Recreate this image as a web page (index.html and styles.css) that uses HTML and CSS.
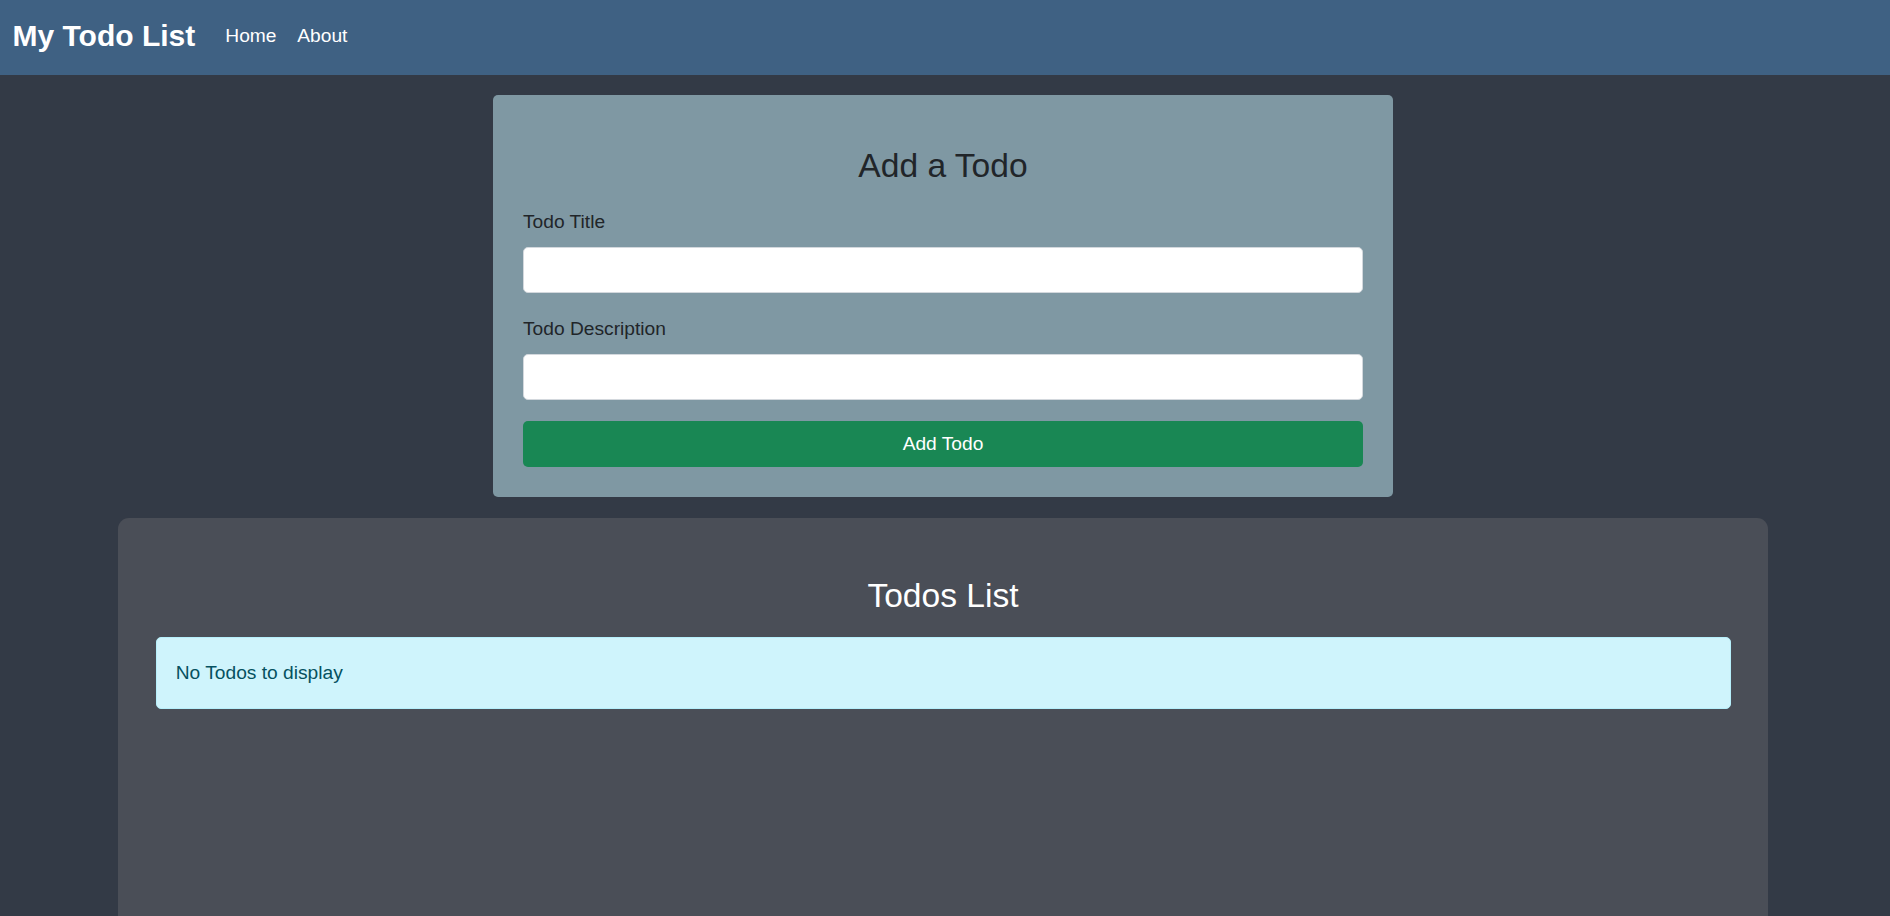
FILE: index.html
```html
<!DOCTYPE html>
<html lang="en">
<head>
<meta charset="utf-8">
<title>My Todo List</title>
<link rel="stylesheet" href="styles.css">
</head>
<body>
<header class="navbar">
  <a class="brand" href="#">My Todo List</a>
  <nav class="nav">
    <a class="nav-link" href="#">Home</a>
    <a class="nav-link" href="#">About</a>
  </nav>
</header>
<main class="main">
  <section class="card-add">
    <h3 class="card-title">Add a Todo</h3>
    <form class="todo-form">
      <div class="form-group">
        <label class="form-label" for="title">Todo Title</label>
        <input class="form-control" type="text" id="title">
      </div>
      <div class="form-group">
        <label class="form-label" for="desc">Todo Description</label>
        <input class="form-control" type="text" id="desc">
      </div>
      <button type="button" class="btn-success">Add Todo</button>
    </form>
  </section>
  <section class="card-list">
    <h3 class="list-title">Todos List</h3>
    <div class="alert-info">No Todos to display</div>
  </section>
</main>
</body>
</html>
```
FILE: styles.css
```css
html, body {
  margin: 0;
  padding: 0;
  overflow: hidden;
}

body {
  background: #333a46;
  font-family: "Liberation Sans", Arial, sans-serif;
  font-size: 19.2px;
  line-height: 28.8px;
  color: #212529;
}

.navbar {
  display: flex;
  align-items: flex-start;
  height: 75px;
  background: #3f6183;
  padding-left: 12.5px;
  box-sizing: border-box;
}

.brand {
  font-size: 30px;
  font-weight: 700;
  line-height: 36px;
  margin-top: 17.6px;
  margin-right: 19.7px;
  color: #ffffff;
  text-decoration: none;
}

.nav {
  display: flex;
  margin-top: 22.3px;
}

.nav-link {
  padding: 0 10.4px;
  color: #ffffff;
  text-decoration: none;
  line-height: 28.8px;
}

.main {
  display: flex;
  flex-direction: column;
  align-items: center;
  padding-right: 4px;
}

.card-add {
  width: 900px;
  box-sizing: border-box;
  margin-top: 20px;
  background: #7f98a3;
  border-radius: 5px;
  padding: 50.5px 30px 29.7px;
}

.card-title {
  margin: 0 0 21.5px;
  font-size: 33.6px;
  line-height: 40.3px;
  font-weight: 400;
  text-align: center;
  color: #212529;
}

.todo-form {
  display: flex;
  flex-direction: column;
}

.form-group {
  display: flex;
  flex-direction: column;
  margin-bottom: 21.3px;
}

.form-group + .form-group {
  margin-bottom: 20.7px;
}

.form-label {
  display: block;
  line-height: 28.8px;
  padding-top: 1px;
  margin-bottom: 10px;
  color: #212529;
}

.form-control {
  display: block;
  height: 46px;
  box-sizing: border-box;
  background: #ffffff;
  border: 1px solid #d3d8dd;
  border-radius: 5px;
  font: inherit;
  padding: 0 14px;
}

.btn-success {
  height: 46.3px;
  box-sizing: border-box;
  background: #198754;
  color: #ffffff;
  border: none;
  border-radius: 5px;
  font: inherit;
  line-height: 28.8px;
  padding: 0;
}

.card-list {
  width: 1650px;
  box-sizing: border-box;
  margin-top: 20.7px;
  min-height: 500px;
  background: #4a4e57;
  border-radius: 11px;
  padding: 57.2px 37.5px 0;
}

.list-title {
  margin: 0 0 20.5px;
  padding-top: 1px;
  font-size: 33.6px;
  line-height: 40.3px;
  font-weight: 400;
  text-align: center;
  color: #ffffff;
}

.alert-info {
  background: #cff4fc;
  border: 1px solid #b6effb;
  border-radius: 5px;
  color: #055160;
  padding: 21.75px 19.2px 19.75px;
  line-height: 28.8px;
}
```
